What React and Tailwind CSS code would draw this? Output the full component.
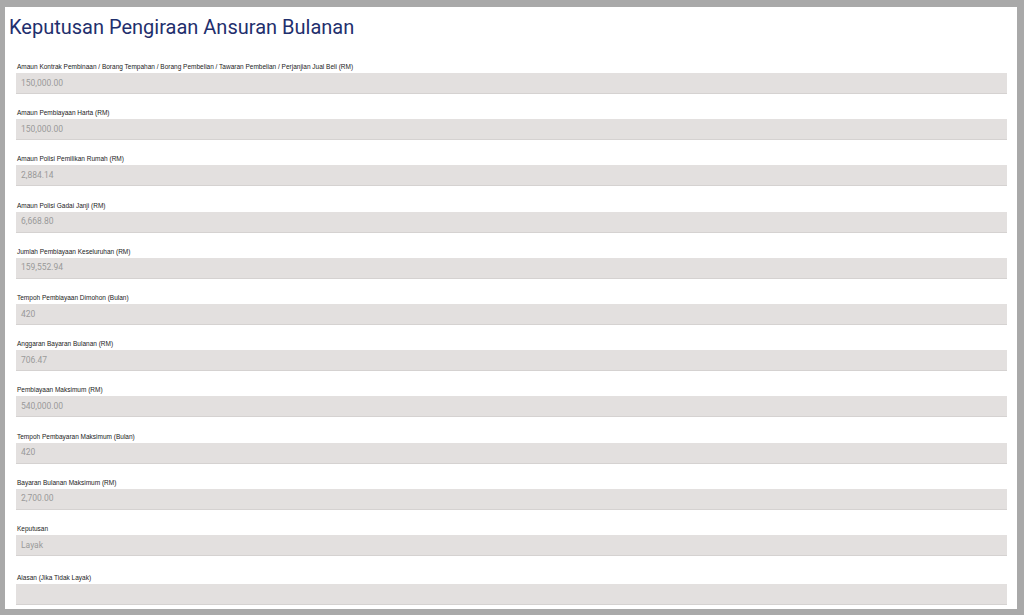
const fields = [
  { label: "Amaun Kontrak Pembinaan / Borang Tempahan / Borang Pembelian / Tawaran Pembelian / Perjanjian Jual Beli (RM)", value: "150,000.00" },
  { label: "Amaun Pembiayaan Harta (RM)", value: "150,000.00" },
  { label: "Amaun Polisi Pemilikan Rumah (RM)", value: "2,884.14" },
  { label: "Amaun Polisi Gadai Janji (RM)", value: "6,668.80" },
  { label: "Jumlah Pembiayaan Keseluruhan (RM)", value: "159,552.94" },
  { label: "Tempoh Pembiayaan Dimohon (Bulan)", value: "420" },
  { label: "Anggaran Bayaran Bulanan (RM)", value: "706.47" },
  { label: "Pembiayaan Maksimum (RM)", value: "540,000.00" },
  { label: "Tempoh Pembayaran Maksimum (Bulan)", value: "420" },
  { label: "Bayaran Bulanan Maksimum (RM)", value: "2,700.00" },
  { label: "Keputusan", value: "Layak" },
];

const Field = ({ label, value, last }) => (
  <div className={last ? "pt-[3px]" : "mb-[14.2px]"}>
    <div className="pl-[1px] text-[6.5px] leading-[10px] text-[#1a1a1a] font-['Liberation_Sans',Arial,sans-serif]">{label}</div>
    <div className="mt-[1px] h-[21px] flex items-center pl-[5px] bg-[#e3e0df] border-b border-[#d5d2d1] text-[8.5px] text-[#9a9a9a] font-['Roboto',sans-serif]">
      {value}
    </div>
  </div>
);

export default function App() {
  return (
    <div className="w-[1024px] h-[615px] bg-[#a9a9a9] pt-[7px] pl-[5px] pr-[7px] pb-[6px] overflow-hidden">
      <div className="h-full bg-white pt-[6px]">
        <h1 className="pl-[4px] text-[20px] leading-[28px] text-[#1f2f6d] font-['Roboto',sans-serif]">
          Keputusan Pengiraan Ansuran Bulanan
        </h1>
        <div className="mt-[21px] pl-[11px] pr-[10px]">
          {fields.map((f) => (
            <Field key={f.label} label={f.label} value={f.value} />
          ))}
          <Field label="Alasan (Jika Tidak Layak)" value="" last />
        </div>
      </div>
    </div>
  );
}
